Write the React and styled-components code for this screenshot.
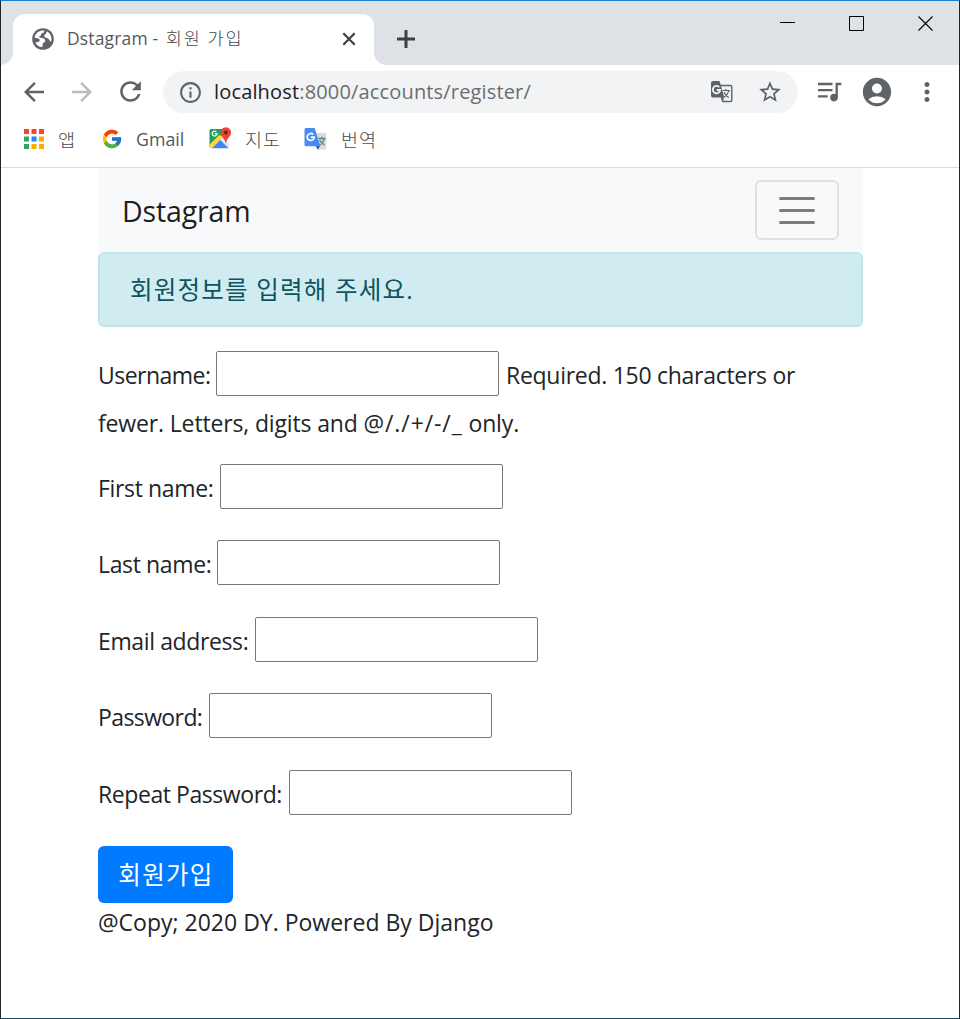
import React from 'react';
import styled, { createGlobalStyle } from 'styled-components';
import {
  MdArrowBack, MdArrowForward, MdRefresh, MdInfoOutline, MdStarBorder,
  MdAccountCircle, MdMoreVert,
} from 'react-icons/md';
import { FcGoogle } from 'react-icons/fc';

const GlobalStyle = createGlobalStyle`
  * { box-sizing: border-box; }
  body { margin: 0; background: #fff; font-family: "Open Sans", "Noto Sans CJK KR", sans-serif; }
  svg { display: block; flex: none; }
`;

const Window = styled.div`
  width: 960px;
  height: 1019px;
  background: #fff;
  border: 1px solid #222628;
  border-top-color: #1a7fd0;
  border-bottom-color: #1c455e;
  display: flex;
  flex-direction: column;
  overflow: hidden;
`;

const TitleBar = styled.div`
  height: 64px;
  flex: none;
  background: #dee1e6;
  display: flex;
  align-items: flex-end;
`;

const TabFoot = styled.div`
  width: 12px;
  height: 12px;
  flex: none;
  background: radial-gradient(circle at ${p => (p.$side === 'left' ? '0 0' : '12px 0')}, #dee1e6 11.5px, #fff 12px);
`;

const Tab = styled.div`
  width: 361px;
  height: 51px;
  flex: none;
  background: #fff;
  border-radius: 12px 12px 0 0;
  display: flex;
  align-items: center;
  padding: 0 17px 2px 19px;
  color: #5f6368;
`;

const TabTitle = styled.span`
  flex: 1;
  margin-left: 13px;
  color: #54585c;
  font-size: 17.5px;
  line-height: 24px;
  padding-bottom: 2px;
  letter-spacing: 0.15px;
  white-space: pre;
`;

const Tracked = styled.span`
  letter-spacing: ${p => p.$by}px;
`;

const NewTab = styled.div`
  height: 52px;
  margin-left: 11px;
  display: flex;
  align-items: center;
`;

const Caption = styled.div`
  margin-left: auto;
  align-self: flex-start;
  display: flex;
  gap: 53px;
  padding: 14px 25px 0 0;
`;

const Toolbar = styled.div`
  height: 54px;
  flex: none;
  display: flex;
  align-items: center;
  padding: 0 17px 0 18px;
  color: #5f6368;
`;

const NavIcon = styled.span`
  width: 48px;
  flex: none;
  padding-bottom: 1px;
  color: ${p => (p.$dim ? '#babcbe' : '#5f6368')};
`;

const AddressBar = styled.div`
  width: 635px;
  height: 42px;
  flex: none;
  border-radius: 21px;
  background: #f1f3f4;
  display: flex;
  align-items: center;
  gap: 0;
  padding: 0 15px;
`;

const Url = styled.span`
  flex: 1;
  margin-left: 11px;
  font-size: 20px;
  line-height: 28px;
  letter-spacing: 0.16px;
  color: #6a6e72;
  white-space: pre;
  b { font-weight: 400; color: #202124; }
`;

const AddressActions = styled.div`
  display: flex;
  align-items: center;
  gap: 24px;
`;

const Actions = styled.div`
  flex: 1;
  display: flex;
  align-items: center;
  justify-content: space-between;
  padding: 0 0 1px 20px;
`;

const Bookmarks = styled.div`
  height: 49px;
  flex: none;
  border-bottom: 1px solid #dadce0;
  display: flex;
  padding: 0 0 9px 22px;
`;

const Bookmark = styled.div`
  width: ${p => p.$width}px;
  flex: none;
  display: flex;
  align-items: center;
  gap: ${p => p.$gap}px;
  color: #54585c;
  font-size: ${p => p.$size || 18.5}px;
  line-height: 24px;
`;

const Hangul = styled.span`
  color: #45494d;
  font-family: "Noto Sans CJK KR", sans-serif;
  font-weight: 300;
  letter-spacing: ${p => p.$track || 0}px;
`;

const Container = styled.main`
  width: 765px;
  margin-left: 97px;
  color: #212529;
  font-size: 23px;
`;

const Navbar = styled.nav`
  height: 84px;
  background: #f8f9fa;
  display: flex;
  align-items: center;
  justify-content: space-between;
  padding: 0 24px;
`;

const Brand = styled.span`
  font-size: 28.5px;
  line-height: 44px;
  margin-top: 2px;
  color: rgba(0, 0, 0, .9);
  letter-spacing: -0.15px;
`;

const Toggler = styled.button`
  width: 84px;
  height: 60px;
  padding: 0;
  border: 2px solid #dfe0e1;
  border-radius: 6px;
  background: transparent;
  display: flex;
  align-items: center;
  justify-content: center;
`;

const Alert = styled.div`
  height: 75px;
  border: 2px solid #bee5eb;
  border-radius: 6px;
  background: #d1ecf1;
  color: #0c5460;
  font-size: 24.5px;
  line-height: 36px;
  padding: 18px 30px 0;
  letter-spacing: 1.2px;
`;

const Form = styled.form`
  margin-top: 24px;
`;

const Row = styled.div`
  height: ${p => p.$height || 76.4}px;
`;

const Line = styled.div`
  display: flex;
  height: ${p => p.$height || 45}px;
`;

const Text = styled.span`
  display: block;
  flex: none;
  width: ${p => (p.$width ? `${p.$width}px` : 'auto')};
  line-height: 48px;
  letter-spacing: ${p => p.$track || 0}px;
  white-space: pre;
`;

const Input = styled.input`
  width: 283px;
  height: 45px;
  flex: none;
  margin: 0 7px 0 0;
  padding: 0 4px;
  border: 1px solid #767676;
  border-radius: 2px;
  background: #fff;
  font: inherit;
`;

const Submit = styled.button`
  display: block;
  width: 135px;
  height: 57px;
  border: 0;
  border-radius: 6px;
  background: #007bff;
  color: #fff;
  padding: 0 0 2px 1px;
  font: 400 24.5px/55px "Noto Sans CJK KR", sans-serif;
  letter-spacing: 1.3px;
`;

const Footer = styled.footer`
  line-height: 39px;
  white-space: pre;
`;

const Globe = () => (
  <svg width="22" height="22" viewBox="0 0 22 22">
    <circle cx="11" cy="11" r="10.8" fill="#5f6368" />
    <path d="M2.600 9.800C3 6 6.200 2.900 10.300 2.500L12.400 2.600C12.300 4.600 11 5.400 9.200 5.600C9.300 7.300 8.500 8.200 7 8.500C7.500 9.700 8.200 9.900 10 9.900C12 10 13.300 11.300 13.300 12.900C12.400 14.900 10.600 14.600 10.600 16.500L10.300 19.300C6.900 19 4.400 17 3.200 14C5.700 14.500 7.600 13.900 7.700 12C7.500 10.500 5.200 10.200 2.600 9.800z" fill="#fff" />
    <path d="M14.600 3.300C17.500 4.700 19.500 7.500 19.500 11C19.500 12.100 19.300 13.100 18.900 14C17.500 12.700 17.200 11 15.500 10.300C14.200 9.700 12.300 9.600 12.200 8.100C12.200 6.500 14.500 6.300 14.600 3.300z" fill="#fff" />
  </svg>
);

const MediaQueue = () => (
  <svg width="24" height="20" viewBox="0 0 24 20" fill="none" stroke="#5f6368" strokeWidth="2.300">
    <path d="M0 2h14.500M0 8.200h14.500M0 14.300h9.700M23.300 2h-4.600v13.500" />
    <circle cx="16" cy="15.600" r="3.800" fill="#5f6368" stroke="none" />
  </svg>
);

const TranslateMono = () => (
  <svg width="22" height="22" viewBox="0 0 22 22">
    <path d="M10 4.500h9.500a1.300 1.300 0 0 1 1.300 1.300v13.400a1.300 1.300 0 0 1-1.300 1.300h-7.800L7 4.500z" fill="#f1f3f4" stroke="#5f6368" strokeWidth="1.400" />
    <path d="M2 0h6.400l1.200 3.600 3.700 12.900H2a2 2 0 0 1-2-2V2a2 2 0 0 1 2-2z" fill="#5f6368" />
    <path d="M11 16.500h2.500l-2 4z" fill="#5f6368" />
    <path d="M8.300 6.200A3.700 3.700 0 1 0 9.200 9H5.800" fill="none" stroke="#f1f3f4" strokeWidth="1.800" />
    <path d="M11.500 9.500h7.500M14.800 8v1.500M17.800 9.800c-.7 2.600-2.500 4.700-4.600 6.100M13 11.300c.8 2.200 2.500 4 4.800 5.200" fill="none" stroke="#5f6368" strokeWidth="1.200" />
  </svg>
);

const TranslateColor = () => (
  <svg width="24" height="24" viewBox="0 0 24 24">
    <path d="M10 6h12.400v15.600a1 1 0 0 1-1 1H14z" fill="#dcdcdc" />
    <path d="M11.500 18.500h4.800l-2.400 4.300z" fill="#3949ab" />
    <path d="M2 1h8.600l5.900 18.300H2a1.500 1.500 0 0 1-1.500-1.500V2.500A1.500 1.500 0 0 1 2 1z" fill="#4a8af4" />
    <path d="M9.200 7.500A3.500 3.500 0 1 0 10.200 10.200H6.800" fill="none" stroke="#fff" strokeWidth="1.700" />
    <path d="M14.500 11.500h7M18 9.700v1.800M20.500 11.700c-.7 2.600-2 4.600-4.200 6M15.700 13c.8 2 2.400 3.800 4.800 5" fill="none" stroke="#607d8b" strokeWidth="1.300" />
  </svg>
);

const MapsLogo = () => (
  <svg width="23" height="23" viewBox="0 0 23 23">
    <path d="M2 2h16v19H2a1.500 1.500 0 0 1-1.500-1.500v-16A1.500 1.500 0 0 1 2 2z" fill="#1fa05a" />
    <path d="M.6 19.800 12.500 8.200l7.700 7.700v3.600a1.500 1.500 0 0 1-1.500 1.500H2z" fill="#e8e8e8" />
    <path d="M.6 17.600 10.500 7.800l2.900 2.900L2.900 21H2A1.500 1.500 0 0 1 .5 19.500z" fill="#fdd835" />
    <path d="M2.900 21.200l8.400-8.300 8.200 8.300z" fill="#4285f4" />
    <path d="M7.300 4.900A2.400 2.400 0 1 0 8 6.700H5.700" fill="none" stroke="#fff" strokeWidth="1.200" />
    <path d="M16.800.3a5.300 5.300 0 0 0-5.300 5.300c0 4.300 4.400 5.200 5.300 11.400.9-6.200 5.300-7.100 5.300-11.400A5.300 5.300 0 0 0 16.800.3z" fill="#e84538" />
    <circle cx="16.800" cy="5.500" r="1.900" fill="#761d18" />
  </svg>
);

const dots = ['#f44336', '#f44336', '#f44336', '#34a263', '#1e88f5', '#f9ab00', '#34a263', '#f9ab00', '#f9ab00'];
const AppsGrid = () => (
  <svg width="22" height="22" viewBox="0 0 22 22">
    {dots.map((c, i) => (
      <rect key={i} x={1 + (i % 3) * 7.5} y={1 + Math.floor(i / 3) * 7.5} width="5" height="5" fill={c} />
    ))}
  </svg>
);

const fields = [
  { label: 'First name:', width: 122, track: -0.35 },
  { label: 'Last name:', width: 119, track: -0.37 },
  { label: 'Email address:', width: 157, track: -0.38 },
  { label: 'Password:', width: 111, track: -0.6 },
  { label: 'Repeat Password:', width: 191, track: -0.43 },
];

export default function App() {
  return (
    <Window>
      <GlobalStyle />
      <TitleBar>
        <TabFoot $side="left" />
        <Tab>
          <Globe />
          <TabTitle>Dstagram <Tracked $by={1.5}>- </Tracked><Hangul $track={1.9}>회원 가입</Hangul></TabTitle>
          <svg width="16" height="16" viewBox="0 0 16 16" stroke="#3c4043" strokeWidth="2.200">
            <path d="M2.300 2.300l11.400 11.400M13.700 2.300L2.300 13.700" />
          </svg>
        </Tab>
        <TabFoot $side="right" />
        <NewTab>
          <svg width="18" height="18" viewBox="0 0 18 18" stroke="#3c4043" strokeWidth="3">
            <path d="M0 9h18M9 0v18" />
          </svg>
        </NewTab>
        <Caption>
          <svg width="16" height="16" viewBox="0 0 16 16"><path d="M0 7.500h15" stroke="#000" /></svg>
          <svg width="16" height="16" viewBox="0 0 16 16"><path d="M.5 1.500h14v14H.5z" fill="none" stroke="#000" /></svg>
          <svg width="16" height="16" viewBox="0 0 16 16"><path d="M.5 1.500l14 14M14.500 1.500L.5 15.500" stroke="#000" strokeWidth="1.100" /></svg>
        </Caption>
      </TitleBar>
      <Toolbar>
        <NavIcon><MdArrowBack size={30} /></NavIcon>
        <NavIcon $dim><MdArrowForward size={30} /></NavIcon>
        <NavIcon><MdRefresh size={31} /></NavIcon>
        <AddressBar>
          <MdInfoOutline size={25} />
          <Url><b>localhost</b>:8000/accounts/register/</Url>
          <AddressActions>
            <TranslateMono />
            <MdStarBorder size={26} />
          </AddressActions>
        </AddressBar>
        <Actions>
          <MediaQueue />
          <MdAccountCircle size={34} />
          <MdMoreVert size={30} />
        </Actions>
      </Toolbar>
      <Bookmarks>
        <Bookmark $width={78} $gap={13}><AppsGrid /><Hangul>앱</Hangul></Bookmark>
        <Bookmark $width={108} $gap={13} $size={17.8}><FcGoogle size={22} />Gmail</Bookmark>
        <Bookmark $width={95} $gap={13}><MapsLogo /><Hangul $track={1}>지도</Hangul></Bookmark>
        <Bookmark $width={90} $gap={13}><TranslateColor /><Hangul $track={1}>번역</Hangul></Bookmark>
      </Bookmarks>
      <Container>
        <Navbar>
          <Brand>Dstagram</Brand>
          <Toggler type="button">
            <svg width="36" height="28" viewBox="0 0 36 28" stroke="#7c7c7d" strokeWidth="3" strokeLinecap="round">
              <path d="M1.500 2.500h33M1.500 14.500h33M1.500 26.500h33" />
            </svg>
          </Toggler>
        </Navbar>
        <Alert>회원정보를 입력해 주세요.</Alert>
        <Form>
          <Row $height={113}>
            <Line $height={48}>
              <Text $width={118} $track={-0.52}>Username:</Text>
              <Input />
              <Text $track={-0.28}>Required. 150 characters or</Text>
            </Line>
            <Text $track={-0.15}>
              fewer. Letters, digits and <Tracked $by={0.9}>@/./+/-/_</Tracked> only.
            </Text>
          </Row>
          {fields.map(f => (
            <Row key={f.label}>
              <Line>
                <Text $width={f.width} $track={f.track}>{f.label}</Text>
                <Input />
              </Line>
            </Row>
          ))}
          <Submit type="button">회원가입</Submit>
        </Form>
        <Footer>@Copy; 2020 DY. Powered By Django</Footer>
      </Container>
    </Window>
  );
}
